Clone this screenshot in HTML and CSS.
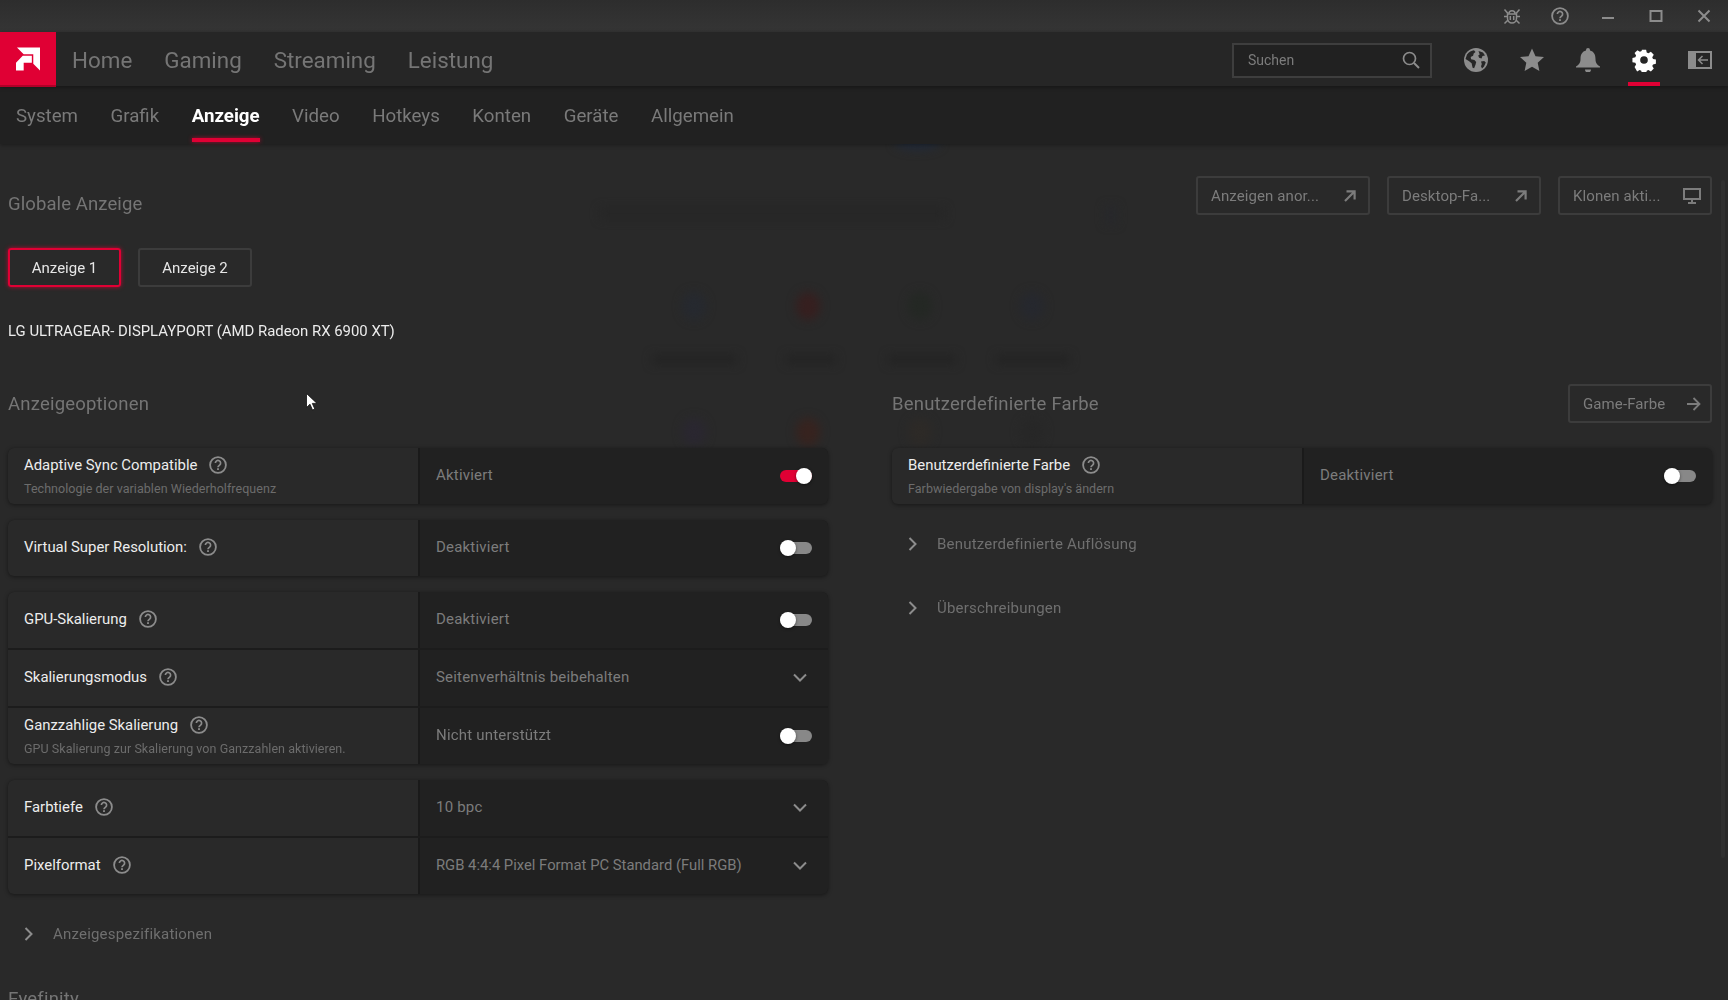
FILE: index.html
```html
<!DOCTYPE html>
<html lang="de">
<head>
<meta charset="utf-8">
<title>AMD Software – Anzeige</title>
<link rel="stylesheet" href="styles.css">
</head>
<body>
<svg class="defs" width="0" height="0" aria-hidden="true">
  <symbol id="help" viewBox="0 0 18 18">
    <circle cx="9" cy="9" r="7.9" fill="none" stroke="currentColor" stroke-width="1.8"/>
    <path d="M6.4 7.1a2.6 2.6 0 1 1 4.2 2c-.9.7-1.6 1.1-1.6 2.1" fill="none" stroke="currentColor" stroke-width="1.7"/>
    <rect x="8.1" y="12.2" width="1.8" height="1.8" fill="currentColor"/>
  </symbol>
  <symbol id="chev-down" viewBox="0 0 14 10">
    <path d="M1 1.5l6 6 6-6" fill="none" stroke="currentColor" stroke-width="2"/>
  </symbol>
  <symbol id="chev-right" viewBox="0 0 10 14">
    <path d="M1.5 1l6 6-6 6" fill="none" stroke="currentColor" stroke-width="2"/>
  </symbol>
  <symbol id="out" viewBox="0 0 12 12">
    <path d="M1 11L10 2M2.5 1.4H10.600V9.500" fill="none" stroke="currentColor" stroke-width="2.200"/>
  </symbol>
</svg>

<header class="titlebar">
  <svg class="tb-icon" viewBox="0 0 18 18"><g fill="none" stroke="currentColor" stroke-width="1.5"><path d="M4.500 7h9v4.500a4.500 4.500 0 0 1-9 0z"/><path d="M6 6.800a3 3 0 0 1 6 0M1.500 2.500l3.500 4M16.500 2.500l-3.500 4M1 9.500h3.500M17 9.500h-3.500M1.500 16.500l3.500-3.500M16.500 16.500l-3.500-3.500M7.300 9v4M10.700 9v4"/></g></svg>
  <svg class="tb-icon"><use href="#help"/></svg>
  <svg class="tb-icon" viewBox="0 0 18 18"><path d="M3 11h12" stroke="currentColor" stroke-width="2"/></svg>
  <svg class="tb-icon" viewBox="0 0 18 18"><rect x="3.500" y="4" width="11" height="10" fill="none" stroke="currentColor" stroke-width="2"/></svg>
  <svg class="tb-icon" viewBox="0 0 18 18"><path d="M3.500 3.500l11 11M14.500 3.500l-11 11" stroke="currentColor" stroke-width="2"/></svg>
</header>

<nav class="mainnav">
  <a class="logo">
    <svg viewBox="0 0 25 24" width="24" height="24"><path fill="#fff" d="M1 0H25V24L18 17V7H8Z"/><path fill="#fff" d="M0 16L7 8.500H16.500V16H8V24H0Z"/></svg>
  </a>
  <div class="mainlinks">
    <span>Home</span><span>Gaming</span><span>Streaming</span><span>Leistung</span>
  </div>
  <div class="search">
    <span>Suchen</span>
    <svg viewBox="0 0 18 18" width="18" height="18"><circle cx="7.500" cy="7.500" r="6" fill="none" stroke="currentColor" stroke-width="1.700"/><path d="M12 12l5 5" stroke="currentColor" stroke-width="1.900"/></svg>
  </div>
  <div class="navicons">
    <span class="navicon"><svg viewBox="0 0 24 24" width="24" height="24"><circle cx="12" cy="12" r="12" fill="#8c8c8c"/><path fill="#262626" d="M3 6.500c2-2.500 4.500-4 7-4.300l1.500 1.800-1.800 1.500-.6 2.200-2.400 1.300.4 2.300 3.300.7 1.800 2-.7 2.800-1.400 3.500-1.500-.5-1-4.500-2.800-2.300L1.500 11zM14.500 3l4.500 1.500 2 3-2.500.4-1 2.600-2.400-.7-.9-2.300 1.500-1zM17 13.500l3.200-.5 1.600 1.500-1.800 4-2 2-1-2.200.8-2.300z"/></svg></span>
    <span class="navicon"><svg viewBox="0 0 24 24" width="24" height="24"><path fill="#8c8c8c" d="M12 .5l3.500 7.700 8.500.9-6.300 5.600 1.700 8.300-7.400-4.200-7.400 4.200 1.700-8.300L0 9.100l8.500-.9z"/></svg></span>
    <span class="navicon"><svg viewBox="0 0 24 24" width="24" height="24"><path fill="#8c8c8c" d="M12 0a2 2 0 0 1 2 2v.6c3.800 1 5.500 4 5.500 8.400 0 3.500 1 5.300 4.500 7.500v1H0v-1c3.500-2.200 4.500-4 4.500-7.500C4.500 6.600 6.200 3.600 10 2.600V2a2 2 0 0 1 2-2zM9 21.500h6a3 3 0 0 1-6 0z"/></svg></span>
    <span class="navicon active"><svg viewBox="0 0 24 24" width="24" height="24"><path fill="#fff" fill-rule="evenodd" d="M9.500 0h5l.7 3.300 2 .9 2.900-1.800 3.400 3.500-1.800 2.800.9 2 3.400.8v5l-3.400.7-.9 2 1.800 2.900-3.400 3.400-2.900-1.800-2 .9-.7 3.400h-5l-.7-3.400-2-.9-2.900 1.800L.9 20.100l1.800-2.900-.9-2L-1.600 14.500v-5l3.400-.8.900-2L.9 3.900 4.300.4l2.900 1.800 2-.9zM12 7.500a4.500 4.500 0 1 0 0 9 4.500 4.500 0 0 0 0-9z" transform="translate(1.800 1.800) scale(.85)"/></svg></span>
    <span class="navicon"><svg viewBox="0 0 24 18" width="24" height="18"><path fill="#8c8c8c" fill-rule="evenodd" d="M0 0h24v18H0zM8 2v14h14V2z"/><path d="M20 9H11M14.500 5l-4 4 4 4" fill="none" stroke="#8c8c8c" stroke-width="1.500"/></svg></span>
  </div>
</nav>

<nav class="subnav">
  <span>System</span><span>Grafik</span><span class="current">Anzeige</span><span>Video</span><span>Hotkeys</span><span>Konten</span><span>Geräte</span><span>Allgemein</span>
</nav>

<main class="content">
  <div class="blur" aria-hidden="true">
    <i class="b-top"></i><i class="b-line"></i><i class="b-end"></i>
    <i class="dot d1"></i><i class="dot d2"></i><i class="dot d3"></i><i class="dot d4"></i>
    <i class="lab l1"></i><i class="lab l2"></i><i class="lab l3"></i><i class="lab l4"></i>
    <i class="dot d5"></i><i class="dot d6"></i><i class="dot d7"></i><i class="dot d8"></i>
  </div>

  <div class="globalhead">
    <h2 class="heading heading-top">Globale Anzeige</h2>
    <div class="actions">
      <button class="btn w-174">Anzeigen anor...<svg width="12" height="12"><use href="#out"/></svg></button>
      <button class="btn w-154">Desktop-Fa...<svg width="12" height="12"><use href="#out"/></svg></button>
      <button class="btn w-154 tight">Klonen akti...<svg viewBox="0 0 18 16" width="18" height="16"><path fill="none" stroke="currentColor" stroke-width="2" d="M1 1h16v10H1z"/><path stroke="currentColor" stroke-width="2" d="M9 11v3M5 15h8"/></svg></button>
    </div>
  </div>

  <div class="displays">
    <button class="disp selected">Anzeige 1</button>
    <button class="disp">Anzeige 2</button>
  </div>

  <p class="monitor">LG ULTRAGEAR- DISPLAYPORT (AMD Radeon RX 6900 XT)</p>

  <div class="columns">
    <section>
      <div class="colhead"><h2 class="heading">Anzeigeoptionen</h2></div>

      <div class="group">
        <div class="row">
          <div class="label"><div class="title">Adaptive Sync Compatible<svg class="help"><use href="#help"/></svg></div><div class="sub">Technologie der variablen Wiederholfrequenz</div></div>
          <div class="value"><span>Aktiviert</span><span class="toggle on"></span></div>
        </div>
      </div>

      <div class="group">
        <div class="row">
          <div class="label"><div class="title">Virtual Super Resolution:<svg class="help"><use href="#help"/></svg></div></div>
          <div class="value"><span>Deaktiviert</span><span class="toggle"></span></div>
        </div>
      </div>

      <div class="group">
        <div class="row">
          <div class="label"><div class="title">GPU-Skalierung<svg class="help"><use href="#help"/></svg></div></div>
          <div class="value"><span>Deaktiviert</span><span class="toggle"></span></div>
        </div>
        <div class="row">
          <div class="label"><div class="title">Skalierungsmodus<svg class="help"><use href="#help"/></svg></div></div>
          <div class="value"><span>Seitenverhältnis beibehalten</span><svg class="chev"><use href="#chev-down"/></svg></div>
        </div>
        <div class="row">
          <div class="label"><div class="title">Ganzzahlige Skalierung<svg class="help"><use href="#help"/></svg></div><div class="sub">GPU Skalierung zur Skalierung von Ganzzahlen aktivieren.</div></div>
          <div class="value"><span>Nicht unterstützt</span><span class="toggle"></span></div>
        </div>
      </div>

      <div class="group">
        <div class="row">
          <div class="label"><div class="title">Farbtiefe<svg class="help"><use href="#help"/></svg></div></div>
          <div class="value"><span>10 bpc</span><svg class="chev"><use href="#chev-down"/></svg></div>
        </div>
        <div class="row">
          <div class="label"><div class="title">Pixelformat<svg class="help"><use href="#help"/></svg></div></div>
          <div class="value"><span class="narrow">RGB 4:4:4 Pixel Format PC Standard (Full RGB)</span><svg class="chev"><use href="#chev-down"/></svg></div>
        </div>
      </div>

      <div class="collapser first-after-rows"><svg class="chev-r"><use href="#chev-right"/></svg>Anzeigespezifikationen</div>
      <h2 class="heading eyefinity">Eyefinity</h2>
    </section>

    <section>
      <div class="colhead">
        <h2 class="heading">Benutzerdefinierte Farbe</h2>
        <button class="btn w-144 tight">Game-Farbe<svg viewBox="0 0 14 14" width="14" height="14"><path d="M0 7h12.500M6.500 1l6 6-6 6" fill="none" stroke="currentColor" stroke-width="1.800"/></svg></button>
      </div>
      <div class="group">
        <div class="row">
          <div class="label"><div class="title">Benutzerdefinierte Farbe<svg class="help"><use href="#help"/></svg></div><div class="sub">Farbwiedergabe von display's ändern</div></div>
          <div class="value"><span>Deaktiviert</span><span class="toggle"></span></div>
        </div>
      </div>
      <div class="collapser first-after-rows"><svg class="chev-r"><use href="#chev-right"/></svg>Benutzerdefinierte Auflösung</div>
      <div class="collapser next"><svg class="chev-r"><use href="#chev-right"/></svg>Überschreibungen</div>
    </section>
  </div>

  <div class="scrollbar"></div>
</main>

<svg class="cursor" viewBox="0 0 12 18" width="12" height="18"><path fill="#fff" stroke="#111" stroke-width=".8" d="M.5.5v14l3.500-3.300 2.500 5.800 2.300-1-2.500-5.600h4.700z"/></svg>
</body>
</html>
```
FILE: styles.css
```css
* { box-sizing: border-box; }
html, body { margin: 0; height: 100%; }
body {
  width: 1728px;
  height: 1000px;
  overflow: hidden;
  position: relative;
  background: #292929;
  font-family: Roboto, "Liberation Sans", sans-serif;
  color: #808080;
}
.defs { position: absolute; }

.titlebar {
  height: 32px;
  background: linear-gradient(#2d2d2d, #353535);
  display: flex;
  justify-content: flex-end;
  align-items: center;
  gap: 30px;
  padding-right: 15px;
  color: #8c8c8c;
}
.tb-icon { width: 18px; height: 18px; display: block; }

.mainnav {
  height: 54px;
  background: #262626;
  display: flex;
  align-items: center;
  position: relative;
  z-index: 3;
  box-shadow: 0 1px 4px rgba(0,0,0,.4);
}
.logo {
  width: 56px;
  height: 55px;
  align-self: flex-start;
  background: #e00034;
  border-bottom: 2px solid #b00028;
  display: flex;
  align-items: center;
  justify-content: center;
}
.mainlinks {
  display: flex;
  gap: 32px;
  margin: 2px 0 0 16px;
  font-size: 22.400px;
  color: #757575;
}
.search {
  margin: 2px 0 0 auto;
  width: 200px;
  height: 35px;
  border: 2px solid #3e3e3e;
  background: #212121;
  display: flex;
  align-items: center;
  justify-content: space-between;
  padding: 0 10px 0 14px;
  font-size: 14px;
  color: #7c7c7c;
}
.search svg { color: #8c8c8c; }
.navicons {
  display: flex;
  margin-left: 28px;
  margin-right: 12px;
  gap: 24px;
}
.navicon {
  width: 32px;
  height: 54px;
  padding-top: 2px;
  display: flex;
  align-items: center;
  justify-content: center;
  position: relative;
}
.navicon.active::after {
  content: "";
  position: absolute;
  left: 0;
  right: 0;
  bottom: 0;
  height: 4px;
  background: #e00034;
}

.subnav {
  height: 58px;
  background: #212121;
  display: flex;
  gap: 32.500px;
  padding: 18px 0 0 16px;
  font-size: 18.700px;
  color: #7a7a7a;
  position: relative;
  z-index: 2;
  box-shadow: 0 1px 4px rgba(0,0,0,.35);
}
.subnav span { position: relative; height: 24px; line-height: 24px; }
.subnav .current { color: #fff; font-weight: 700; }
.subnav .current::after {
  content: "";
  position: absolute;
  left: 0;
  right: 0;
  top: 34px;
  height: 4px;
  background: #e00034;
  box-shadow: 0 0 4px rgba(224,0,52,.7);
}

.content {
  position: relative;
  height: 856px;
  padding: 0 16px 0 8px;
  overflow: hidden;
}
.blur { position: absolute; inset: 0; filter: blur(5px); pointer-events: none; }
.blur i { position: absolute; display: block; }
.b-top { left: 895px; top: -8px; width: 45px; height: 14px; border-radius: 50%; background: #222a38; }
.b-line { left: 600px; top: 64px; width: 345px; height: 11px; background: #262626; }
.b-end { left: 1105px; top: 62px; width: 12px; height: 18px; background: #27282b; }
.dot { width: 24px; height: 28px; border-radius: 50%; top: 148px; }
.d1 { left: 682px; background: #26292f; }
.d2 { left: 796px; background: #361f1f; }
.d3 { left: 908px; background: #242824; }
.d4 { left: 1020px; background: #26282e; }
.d5 { left: 682px; top: 274px; background: #2a2730; }
.d6 { left: 796px; top: 274px; background: #37231f; }
.d7 { left: 908px; top: 274px; background: #2d2a27; }
.d8 { left: 1020px; top: 274px; background: #272727; }
.lab { top: 211px; height: 9px; background: #232323; }
.l1 { left: 652px; width: 85px; }
.l2 { left: 786px; width: 50px; }
.l3 { left: 888px; width: 68px; }
.l4 { left: 996px; width: 74px; }

.globalhead, .displays, .monitor, .columns { position: relative; }
.globalhead { display: flex; justify-content: space-between; padding-top: 32px; }
.heading {
  margin: 0;
  font-size: 18.500px;
  line-height: 23px;
  font-weight: 400;
  letter-spacing: .2px;
  color: #757575;
}
.heading-top { margin-top: 17px; letter-spacing: .1px; }
.actions { display: flex; gap: 17px; }
.btn {
  height: 39px;
  border: 2px solid #3c3c3c;
  border-radius: 3px;
  background: transparent;
  color: #7c7c7c;
  font: inherit;
  font-size: 15px;
  letter-spacing: .1px;
  display: flex;
  align-items: center;
  justify-content: space-between;
  padding: 0 12px 0 13px;
}
.btn.tight { padding-right: 9px; }
.w-174 { width: 174px; }
.w-154 { width: 154px; }
.w-144 { width: 144px; }

.displays { display: flex; gap: 17px; margin-top: 32px; }
.disp {
  height: 39px;
  border: 2px solid #3c3c3c;
  border-radius: 3px;
  background: transparent;
  color: #e6e6e6;
  font: inherit;
  font-size: 15px;
  padding: 0;
  width: 114px;
}
.disp.selected {
  width: 113px;
  border-color: #e00034;
  box-shadow: 0 0 4px rgba(224,0,52,.8);
}
.monitor {
  margin: 34px 0 0;
  height: 20px;
  line-height: 20px;
  font-size: 14.900px;
  color: #ececec;
}

.columns {
  display: grid;
  grid-template-columns: 820px 820px;
  gap: 64px;
  margin-top: 43px;
}
.colhead {
  height: 39px;
  margin-bottom: 25px;
  display: flex;
  justify-content: space-between;
  align-items: center;
}
.colhead .heading { margin-top: 2px; }

.group {
  margin-bottom: 16px;
  border-radius: 6px;
  overflow: hidden;
  box-shadow: 0 1px 4px rgba(0,0,0,.45);
  display: flex;
  flex-direction: column;
  gap: 2px;
  background-color: #1c1c1c;
}
.row {
  height: 56px;
  display: grid;
  grid-template-columns: 410px 1fr;
  background: #292929;
}
.label {
  padding: 0 0 2px 16px;
  display: flex;
  flex-direction: column;
  justify-content: center;
  background: #292929;
}
.title {
  display: flex;
  align-items: center;
  font-size: 14.900px;
  line-height: 20px;
  color: #ededed;
}
.help { width: 18px; height: 18px; margin-left: 12px; color: #8c8c8c; }
.sub {
  margin-top: 6px;
  font-size: 12.500px;
  line-height: 16px;
  letter-spacing: .05px;
  color: #6c6c6c;
}
.label:has(.sub) { padding-bottom: 0; }
.value {
  border-left: 2px solid #1a1a1a;
  background: #212121;
  display: flex;
  align-items: center;
  justify-content: space-between;
  padding: 0 16px;
  font-size: 15px;
  letter-spacing: .2px;
  color: #7c7c7c;
}
.value > span:first-child { margin-bottom: 2px; }
.value > .narrow { letter-spacing: 0; font-size: 14.800px; }
.chev { width: 14px; height: 10px; margin-right: 5px; color: #8c8c8c; }
.toggle {
  position: relative;
  width: 32px;
  height: 12px;
  border-radius: 6px;
  background: #888;
}
.toggle::after {
  content: "";
  position: absolute;
  left: 0;
  top: -2px;
  width: 16px;
  height: 16px;
  border-radius: 50%;
  background: #fff;
  box-shadow: 0 1px 3px rgba(0,0,0,.5);
}
.toggle.on { background: #e00034; }
.toggle.on::after { left: 16px; }

.collapser {
  display: flex;
  align-items: center;
  height: 24px;
  font-size: 15px;
  letter-spacing: .2px;
  color: #6f6f6f;
}
.first-after-rows { margin-top: 28px; }
.next { margin-top: 40px; }
.chev-r { width: 10px; height: 14px; margin: 0 19px 0 16px; color: #8c8c8c; }
.eyefinity { margin-top: 42px; }

.scrollbar {
  position: absolute;
  right: 3px;
  top: 36px;
  width: 4px;
  height: 678px;
  background: #303030;
  border-radius: 2px;
}
.cursor {
  position: absolute;
  left: 306px;
  top: 393px;
  z-index: 5;
}
```
